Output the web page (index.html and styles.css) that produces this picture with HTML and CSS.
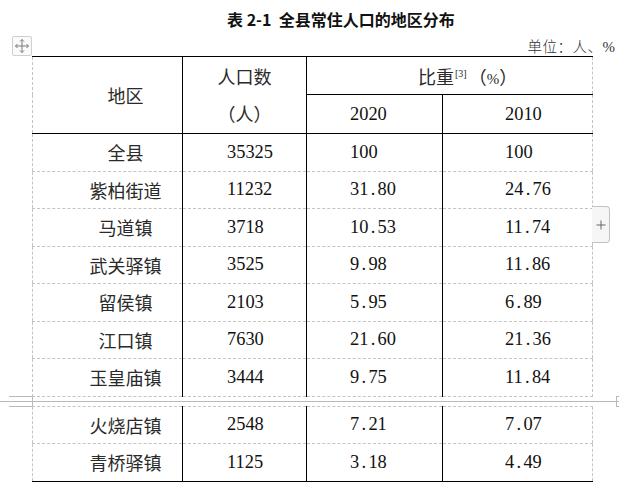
FILE: index.html
```html
<!DOCTYPE html>
<html lang="zh-CN">
<head>
<meta charset="utf-8">
<title>表 2-1 全县常住人口的地区分布</title>
<link rel="stylesheet" href="styles.css">
</head>
<body>
<div class="doc">
  <div class="title">表 2-1&nbsp; 全县常住人口的地区分布</div>
  <div class="toprow">
    <div class="handle">
      <svg width="18" height="18" viewBox="0 0 18 18" fill="none" stroke="#7a7a7a" stroke-width="1">
        <path d="M9 2.5V15.5M2.5 9H15.5"/>
        <path d="M7 4.5L9 2.5L11 4.5M7 13.5L9 15.5L11 13.5M4.5 7L2.5 9L4.5 11M13.5 7L15.5 9L13.5 11"/>
      </svg>
    </div>
    <div class="unit">单位：人、<span class="pct">%</span></div>
  </div>

  <div class="tablewrap">
    <table class="grid first">
      <colgroup><col class="w1"><col class="w2"><col class="w3"><col class="w4"></colgroup>
      <thead>
        <tr class="h1">
          <th rowspan="2" class="c1 cjk">地区</th>
          <th rowspan="2" class="vline cjk hc2">人口数<br>（人）</th>
          <th colspan="2" class="vline cjk hratio">比重<sup class="ref">[3]</sup>（<span class="pctsym">%</span>）</th>
        </tr>
        <tr class="h2">
          <th class="vline num c3">2020</th>
          <th class="vline num c4">2010</th>
        </tr>
      </thead>
      <tbody>
        <tr><td class="c1 cjk">全县</td><td class="vline num c2">35325</td><td class="vline mono c3">100</td><td class="vline mono c4">100</td></tr>
        <tr><td class="c1 cjk">紫柏街道</td><td class="vline num c2">11232</td><td class="vline mono c3">31<span class="dot">.</span>80</td><td class="vline mono c4">24<span class="dot">.</span>76</td></tr>
        <tr><td class="c1 cjk">马道镇</td><td class="vline num c2">3718</td><td class="vline mono c3">10<span class="dot">.</span>53</td><td class="vline mono c4">11<span class="dot">.</span>74</td></tr>
        <tr><td class="c1 cjk">武关驿镇</td><td class="vline num c2">3525</td><td class="vline mono c3">9<span class="dot">.</span>98</td><td class="vline mono c4">11<span class="dot">.</span>86</td></tr>
        <tr><td class="c1 cjk">留侯镇</td><td class="vline num c2">2103</td><td class="vline mono c3">5<span class="dot">.</span>95</td><td class="vline mono c4">6<span class="dot">.</span>89</td></tr>
        <tr><td class="c1 cjk">江口镇</td><td class="vline num c2">7630</td><td class="vline mono c3">21<span class="dot">.</span>60</td><td class="vline mono c4">21<span class="dot">.</span>36</td></tr>
        <tr><td class="c1 cjk">玉皇庙镇</td><td class="vline num c2">3444</td><td class="vline mono c3">9<span class="dot">.</span>75</td><td class="vline mono c4">11<span class="dot">.</span>84</td></tr>
      </tbody>
    </table>
    <div class="addtab">
      <svg width="10" height="10" viewBox="0 0 10 10" stroke="#666" stroke-width="1"><path d="M5 0.5V9.5M0.5 5H9.5"/></svg>
    </div>
  </div>

  <div class="pagebreak">
    <div class="stub-left"></div>
    <div class="stub-right"></div>
  </div>

  <div class="tablewrap">
    <table class="grid second">
      <colgroup><col class="w1"><col class="w2"><col class="w3"><col class="w4"></colgroup>
      <tbody>
        <tr><td class="c1 cjk">火烧店镇</td><td class="vline num c2">2548</td><td class="vline mono c3">7<span class="dot">.</span>21</td><td class="vline mono c4">7<span class="dot">.</span>07</td></tr>
        <tr><td class="c1 cjk">青桥驿镇</td><td class="vline num c2">1125</td><td class="vline mono c3">3<span class="dot">.</span>18</td><td class="vline mono c4">4<span class="dot">.</span>49</td></tr>
      </tbody>
    </table>
  </div>
</div>
</body>
</html>
```
FILE: styles.css
```css
html, body {
  margin: 0;
  padding: 0;
  background: #ffffff;
}

.doc {
  width: 619px;
  height: 489px;
  overflow: hidden;
  color: #1a1a1a;
}

.title {
  margin-top: 9px;
  height: 20px;
  line-height: 20px;
  padding-left: 227px;
  font-family: "Noto Sans CJK SC", "Noto Sans", sans-serif;
  font-size: 16px;
  font-weight: 700;
  color: #111;
  white-space: nowrap;
}

.toprow {
  margin-top: 7px;
  height: 20px;
  display: flex;
  align-items: center;
}

.handle {
  margin-left: 12px;
  width: 18px;
  height: 18px;
  border: 1px solid #cfcfcf;
  border-radius: 2px;
  background: #fafafa;
  display: flex;
  align-items: center;
  justify-content: center;
}

.unit {
  margin-left: auto;
  margin-right: 4px;
  font-family: "Noto Sans CJK SC", sans-serif;
  font-weight: 300;
  font-size: 14.5px;
  line-height: 18px;
  color: #333;
  letter-spacing: 0.5px;
}

.unit .pct {
  font-family: "Liberation Serif", serif;
  font-size: 15px;
  letter-spacing: 0;
}

.tablewrap {
  margin-left: 32px;
  width: 560px;
  position: relative;
}

.grid {
  border-collapse: collapse;
  table-layout: fixed;
  width: 560px;
  border-left: 1px dashed #c4c4c4;
  border-right: 1px dashed #c4c4c4;
}

.grid .w1 { width: 150px; }
.grid .w2 { width: 124px; }
.grid .w3 { width: 136px; }
.grid .w4 { width: 150px; }

.grid th,
.grid td {
  padding: 0;
  font-weight: normal;
  vertical-align: middle;
  white-space: nowrap;
  text-align: left;
  box-sizing: border-box;
}

.grid td {
  height: 37.5px;
  border-top: 1px dashed #c4c4c4;
}

.first {
  border-top: 1px solid #000;
  border-bottom: 1px dashed #c4c4c4;
}

.first thead tr.h1 th { height: 38px; }
.first thead tr.h2 th { height: 39px; }
.first thead tr.h2 th,
.first thead th.hratio { border-bottom: 1px solid #000; }
.first thead tr.h1 th[rowspan] { border-bottom: 1px solid #000; }

.first tbody tr:first-child td { border-top: 1px solid #000; }

.second {
  border-top: 1px dashed #c4c4c4;
  border-bottom: 1px solid #000;
}

.vline { border-left: 1px solid #000; }

.cjk {
  font-family: "Noto Sans CJK SC", sans-serif;
  font-weight: 300;
  font-size: 18px;
  color: #2a2a2a;
}

.num,
.mono {
  font-family: "Liberation Serif", "Times New Roman", serif;
  font-size: 18.4px;
  color: #111;
}

.mono .dot {
  display: inline-block;
  width: 0.5em;
  text-align: center;
}

.c1 {
  padding-left: 36px !important;
  text-align: center !important;
}

.c2 { padding-left: 44px !important; }
.c3 { padding-left: 43px !important; }
.c4 { padding-left: 62px !important; }

.hc2 {
  text-align: center !important;
  line-height: 37.5px;
}

.hratio {
  padding-left: 111px !important;
}

.ref {
  font-family: "Liberation Serif", serif;
  font-size: 10px;
  vertical-align: 7px;
  line-height: 0;
  margin: 0 2px 0 1px;
}

.pctsym {
  font-family: "Liberation Serif", serif;
  font-size: 15px;
}

.addtab {
  position: absolute;
  left: 560px;
  top: 150px;
  width: 17px;
  height: 35px;
  border: 1px solid #c2c2c2;
  border-left: none;
  border-radius: 0 4px 4px 0;
  background: #f6f6f6;
  display: flex;
  align-items: center;
  justify-content: center;
}

.pagebreak {
  margin-top: -1px;
  margin-bottom: -1px;
  height: 11px;
  display: flex;
  background: linear-gradient(#b9b9b9, #b9b9b9) no-repeat 0 5px / 100% 1px;
}

.stub-left {
  margin-left: 9px;
  width: 23px;
  border-top: 1px solid #b9b9b9;
  border-bottom: 1px solid #b9b9b9;
  border-right: 1px solid #b9b9b9;
}

.stub-right {
  margin-left: auto;
  width: 4px;
  margin-right: -2px;
  border-top: 1px solid #b9b9b9;
  border-bottom: 1px solid #b9b9b9;
  border-left: 1px solid #b9b9b9;
}
```
